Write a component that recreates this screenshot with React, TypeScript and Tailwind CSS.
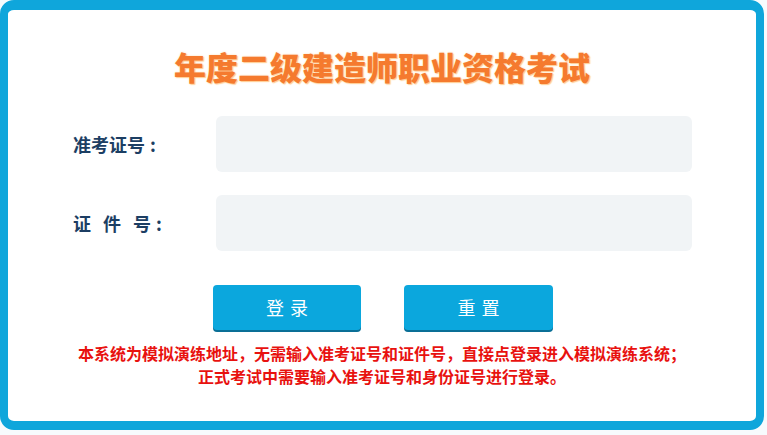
import { useState } from 'react';

export default function App() {
    const [examNo, setExamNo] = useState('');
    const [idNo, setIdNo] = useState('');

    const font = { fontFamily: '"Noto Sans CJK SC", "Noto Sans", sans-serif' };

    return (
        <div className="w-[767px] h-[435px] bg-[#f7fbfd]" style={font}>
            <div className="w-[764px] h-[430px] rounded-[14px] border-x-[8px] border-t-[10px] border-b-[9px] border-[#0fa6db] bg-white flex flex-col">
                {/* Title */}
                <h1 className="mt-[36px] text-center text-[32px] leading-[40px] font-black text-[#f57a2e] [text-shadow:0_0_2px_#ffd8a8,1px_1px_1px_#ffc98c]">
                    年度二级建造师职业资格考试
                </h1>

                {/* Form */}
                <div className="mt-[30px] flex flex-col gap-[23px] pl-[65px]">
                    <div className="flex items-center">
                        <label className="w-[143px] text-[18px] font-bold text-[#1c3e63]">
                            准考证号<span className="ml-[5px]">:</span>
                        </label>
                        <input
                            value={examNo}
                            onChange={(e) => setExamNo(e.target.value)}
                            className="w-[476px] h-[56px] rounded-[6px] bg-[#f1f4f6] outline-none px-3"
                        />
                    </div>
                    <div className="flex items-center">
                        <label className="w-[143px] text-[18px] font-bold text-[#1c3e63] flex">
                            <span className="w-[30px]">证</span>
                            <span className="w-[30px]">件</span>
                            <span>号</span>
                            <span className="ml-[5px]">:</span>
                        </label>
                        <input
                            value={idNo}
                            onChange={(e) => setIdNo(e.target.value)}
                            className="w-[476px] h-[56px] rounded-[6px] bg-[#f1f4f6] outline-none px-3"
                        />
                    </div>
                </div>

                {/* Buttons */}
                <div className="mt-[34px] flex pl-[205px] gap-[43px]">
                    <button className="w-[148px] h-[45px] rounded-[4px] bg-[#0ba7dd] text-white text-[18px] tracking-[6px] pl-[6px] shadow-[0_2px_0_#0a6f96]">
                        登录
                    </button>
                    <button
                        onClick={() => {
                            setExamNo('');
                            setIdNo('');
                        }}
                        className="w-[149px] h-[45px] rounded-[4px] bg-[#0ba7dd] text-white text-[18px] tracking-[6px] pl-[6px] shadow-[0_2px_0_#0a6f96]"
                    >
                        重置
                    </button>
                </div>

                {/* Notice */}
                <div className="mt-[12px] text-center text-[16px] leading-[23px] font-bold text-[#e8120f]">
                    <p>本系统为模拟演练地址，无需输入准考证号和证件号，直接点登录进入模拟演练系统；</p>
                    <p>正式考试中需要输入准考证号和身份证号进行登录。</p>
                </div>
            </div>
        </div>
    );
}
